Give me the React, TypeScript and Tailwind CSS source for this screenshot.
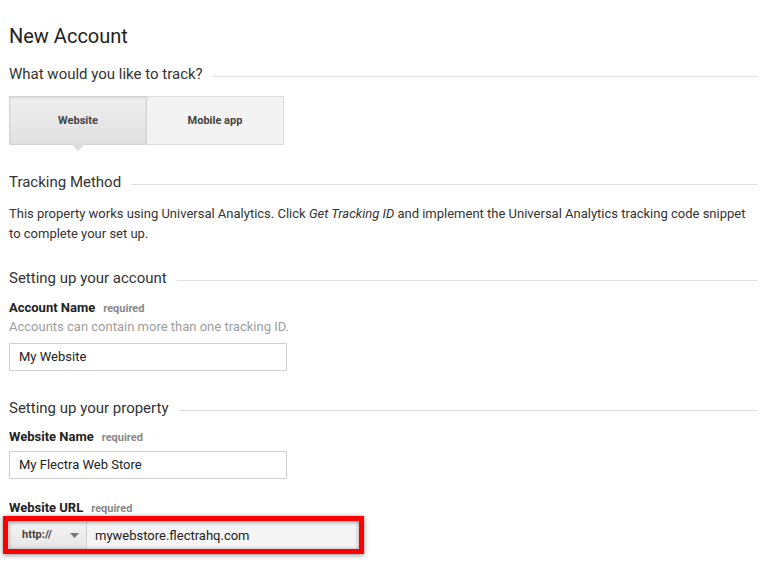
import React from 'react';

function SectionHeading({ title, className }: { title: string; className?: string }) {
    return (
        <div className={`flex items-center gap-[10px] ${className}`}>
            <span className="text-[15px] leading-[22px] text-[#333]">{title}</span>
            <div className="flex-1 h-px bg-[#e0e0e0] mt-[4px]" />
        </div>
    );
}

function FieldLabel({ label, className }: { label: string; className?: string }) {
    return (
        <div className={`flex items-baseline leading-[18px] ${className}`}>
            <span className="text-[13px] font-bold text-[#222]">{label}</span>
            <span className="ml-[8px] text-[11px] font-bold text-[#888]">required</span>
        </div>
    );
}

function TextField({ value, className }: { value: string; className?: string }) {
    return (
        <div
            className={`w-[278px] h-[28px] border border-[#d0d0d0] bg-white flex items-center px-[9px] text-[13px] text-[#222] ${className}`}
        >
            {value}
        </div>
    );
}

export default function App() {
    return (
        <div
            className="w-[773px] h-[568px] bg-white overflow-hidden pl-[9px] pr-[15px] pt-[22px]"
            style={{ fontFamily: 'Roboto, "Liberation Sans", sans-serif' }}
        >
            <h1 className="text-[20px] leading-[28px] text-[#222]">New Account</h1>

            <SectionHeading title="What would you like to track?" className="mt-[13px]" />

            <div className="mt-[11px] flex w-[275px] h-[49px]">
                <div className="relative w-[138px] h-full flex items-center justify-center border border-[#d2d2d2] bg-gradient-to-b from-[#eeeeee] to-[#e1e1e1] shadow-[inset_0_1px_2px_rgba(0,0,0,0.08)]">
                    <span className="text-[11px] font-bold text-[#444] mt-[2px]">Website</span>
                    <div className="absolute left-1/2 -translate-x-1/2 top-full w-0 h-0 border-l-[7px] border-r-[7px] border-t-[7px] border-l-transparent border-r-transparent border-t-[#dcdcdc]" />
                </div>
                <div className="w-[137px] h-full flex items-center justify-center border border-l-0 border-[#dcdcdc] bg-[#f3f3f3]">
                    <span className="text-[11px] font-bold text-[#444] mt-[2px]">Mobile app</span>
                </div>
            </div>

            <SectionHeading title="Tracking Method" className="mt-[26px]" />

            <p className="mt-[11px] text-[13px] leading-[20px] text-[#333]">
                This property works using Universal Analytics. Click <em>Get Tracking ID</em> and implement the Universal
                Analytics tracking code snippet to complete your set up.
            </p>

            <SectionHeading title="Setting up your account" className="mt-[23px]" />

            <FieldLabel label="Account Name" className="mt-[10px]" />
            <div className="text-[13px] leading-[18px] text-[#9e9e9e]">Accounts can contain more than one tracking ID.</div>
            <TextField value="My Website" className="mt-[7px]" />

            <SectionHeading title="Setting up your property" className="mt-[26px]" />

            <FieldLabel label="Website Name" className="mt-[9px]" />
            <TextField value="My Flectra Web Store" className="mt-[4px]" />

            <FieldLabel label="Website URL" className="mt-[20px]" />

            <div className="relative mt-[4px] w-[349px] h-[27px] flex">
                <div className="w-[78px] h-full flex items-center pl-[13px] border-r border-[#d0d0d0] bg-gradient-to-b from-[#f4f4f4] to-[#e6e6e6]">
                    <span className="text-[11px] font-bold text-[#444]">http://</span>
                    <svg className="ml-[18px]" width="9" height="5" viewBox="0 0 9 5">
                        <path d="M0 0h9L4.5 5z" fill="#777" />
                    </svg>
                </div>
                <div className="flex-1 h-full flex items-center pl-[8px] bg-[#f5f5f5] text-[13px] text-[#222]">
                    mywebstore.flectrahq.com
                </div>
                <div className="absolute -left-[6px] -right-[6px] -top-[6px] -bottom-[5px] border-[5px] border-[#ff0000] shadow-[0_1px_5px_rgba(0,0,0,0.45),inset_0_1px_4px_rgba(0,0,0,0.45)] pointer-events-none" />
            </div>
        </div>
    );
}
